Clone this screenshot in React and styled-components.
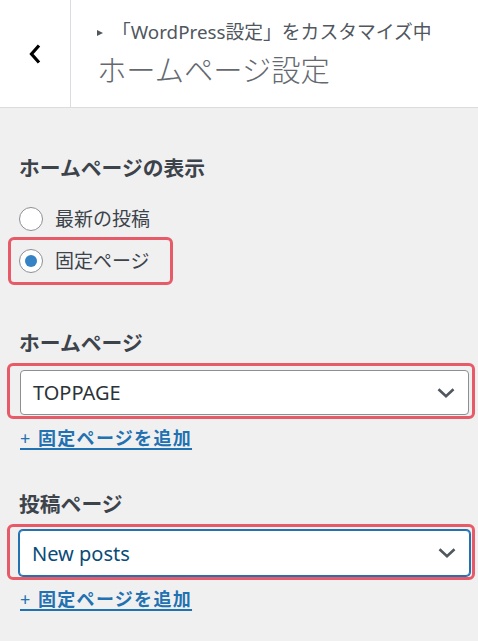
import React from 'react';
import styled, { createGlobalStyle } from 'styled-components';

const GlobalStyle = createGlobalStyle`
  html, body {
    margin: 0;
    padding: 0;
    background: #f0f0f1;
  }
  body {
    font-family: "Noto Sans", "Noto Sans CJK JP", sans-serif;
    color: #3c434a;
  }
`;

const Header = styled.header`
  display: flex;
  height: 107px;
  background: #fff;
  border-bottom: 1px solid #dcdcde;
`;

const BackButton = styled.button`
  width: 71px;
  flex-shrink: 0;
  display: flex;
  align-items: center;
  justify-content: center;
  background: none;
  border: 0;
  border-right: 1px solid #dcdcde;
  padding: 0;
  cursor: pointer;
`;

const HeaderText = styled.div`
  padding: 19px 0 0 26px;
`;

const Crumb = styled.div`
  display: flex;
  align-items: center;
  font-size: 18.8px;
  line-height: 26px;
  color: #50575e;
  white-space: nowrap;
`;

const CrumbArrow = styled.span`
  width: 0;
  height: 0;
  border-top: 3.5px solid transparent;
  border-bottom: 3.5px solid transparent;
  border-left: 6px solid #50575e;
  margin: 1px 9px 0 0;
`;

const Title = styled.h1`
  margin: 8px 0 0;
  font-size: 29.3px;
  line-height: 34px;
  font-weight: 300;
  color: #646970;
  white-space: nowrap;
`;

const Content = styled.main`
  padding: 46px 3px 40px 19px;
`;

const Section = styled.section`
  margin-top: ${p => p.$gap || 0}px;
`;

const SectionTitle = styled.h2`
  margin: 0;
  font-size: 20.8px;
  line-height: 28px;
  font-weight: 700;
  color: #3c434a;
`;

const RadioList = styled.div`
  display: flex;
  flex-direction: column;
  align-items: flex-start;
  gap: 6px;
  margin-top: 25px;
`;

const Highlight = styled.div`
  border: 3px solid #e65b67;
  border-radius: 6px;
  margin-left: ${p => p.$shift}px;
  padding: ${p => p.$pad};
  ${p => p.$inline ? 'display: inline-flex;' : ''}
`;

const RadioRow = styled.label`
  display: flex;
  align-items: center;
  gap: 12px;
  font-size: 19px;
  line-height: 24px;
  color: #3c434a;
`;

const RadioDot = styled.span`
  width: 24px;
  height: 24px;
  box-sizing: border-box;
  border-radius: 50%;
  border: 1px solid #8c8f94;
  background: #fff;
  display: flex;
  align-items: center;
  justify-content: center;
  &::before {
    content: '';
    width: 12px;
    height: 12px;
    border-radius: 50%;
    background: ${p => p.$checked ? '#3582c4' : 'transparent'};
  }
`;

const SelectBox = styled.div`
  display: flex;
  align-items: center;
  justify-content: space-between;
  height: ${p => p.$focused ? 46 : 45}px;
  box-sizing: border-box;
  padding: 0 13px 0 12px;
  background: #fff;
  border-radius: 4px;
  border: 1px solid ${p => p.$focused ? '#2271b1' : '#8c8f94'};
  box-shadow: ${p => p.$focused ? '0 0 0 1px #2271b1' : 'none'};
  color: ${p => p.$focused ? '#0a4b78' : '#2c3338'};
  font-size: 20px;
`;

const SelectWrap = styled.div`
  margin-top: 6px;
`;

const AddLink = styled.a`
  display: inline-block;
  margin-top: 9px;
  margin-left: 1px;
  font-size: 18px;
  line-height: 20px;
  letter-spacing: 1.3px;
  font-weight: 700;
  color: #2271b1;
  white-space: pre;
  text-decoration: underline;
  text-underline-offset: 3px;
  text-decoration-thickness: 2px;
  span {
    font-weight: 400;
    letter-spacing: 1.5px;
  }
`;

const ChevronLeft = () => (
  <svg width="14" height="22" viewBox="0 0 14 22" fill="none">
    <path d="M11 2.5 L3.5 11 L11 19.5" stroke="#000" strokeWidth="3.2" strokeLinecap="butt" strokeLinejoin="miter" />
  </svg>
);

const ChevronDown = () => (
  <svg width="18" height="10" viewBox="0 0 18 10" fill="none">
    <path d="M1.5 1.2 L9 8.2 L16.5 1.2" stroke="#50575e" strokeWidth="2.6" />
  </svg>
);

const PageSelect = ({ value, focused }) => (
  <SelectWrap>
    <Highlight $shift={-12} $pad={focused ? '3px 2px 1px 9px' : '4px 3px 1px 10px'}>
      <SelectBox $focused={focused}>
        <span>{value}</span>
        <ChevronDown />
      </SelectBox>
    </Highlight>
  </SelectWrap>
);

export default function App() {
  return (
    <>
      <GlobalStyle />
      <Header>
        <BackButton aria-label="戻る">
          <ChevronLeft />
        </BackButton>
        <HeaderText>
          <Crumb>
            <CrumbArrow />
            「WordPress設定」をカスタマイズ中
          </Crumb>
          <Title>ホームページ設定</Title>
        </HeaderText>
      </Header>
      <Content>
        <Section>
          <SectionTitle>ホームページの表示</SectionTitle>
          <RadioList>
            <RadioRow>
              <RadioDot />
              最新の投稿
            </RadioRow>
            <Highlight $shift={-11} $pad="9px 20px 9px 8px" $inline>
              <RadioRow>
                <RadioDot $checked />
                固定ページ
              </RadioRow>
            </Highlight>
          </RadioList>
        </Section>
        <Section $gap={44}>
          <SectionTitle>ホームページ</SectionTitle>
          <PageSelect value="TOPPAGE" />
          <AddLink href="#"><span>+ </span>固定ページを追加</AddLink>
        </Section>
        <Section $gap={40}>
          <SectionTitle>投稿ページ</SectionTitle>
          <PageSelect value="New posts" focused />
          <AddLink href="#"><span>+ </span>固定ページを追加</AddLink>
        </Section>
      </Content>
    </>
  );
}
